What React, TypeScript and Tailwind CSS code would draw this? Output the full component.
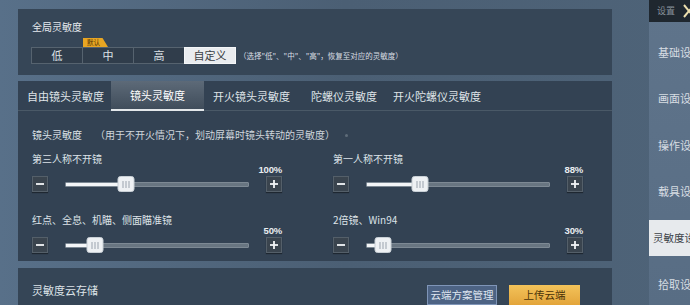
import React from "react";

type SliderProps = {
  label: string;
  percent: string;
  pos: number;
};

const TABS = [
  { label: "自由镜头灵敏度", w: "w-[93px]" },
  { label: "镜头灵敏度", w: "w-[93px]", active: true },
  { label: "开火镜头灵敏度", w: "w-[98px]" },
  { label: "陀螺仪灵敏度", w: "w-[82px]" },
  { label: "开火陀螺仪灵敏度", w: "w-[110px]" },
];

const MENU = ["基础设置", "画面设置", "操作设置", "载具设置", "灵敏度设置", "拾取设置"];

function StepButton({ plus }: { plus?: boolean }) {
  return (
    <div className="w-[16px] h-[16px] shrink-0 bg-[#3a444e] border border-[#545f69] shadow-[0_1px_1px_rgba(0,0,0,0.4)] flex items-center justify-center">
      <svg width="10" height="10" viewBox="0 0 10 10">
        <line x1="1" y1="5" x2="9" y2="5" stroke="#f2f4f6" strokeWidth="1.8" />
        {plus && <line x1="5" y1="1" x2="5" y2="9" stroke="#f2f4f6" strokeWidth="1.8" />}
      </svg>
    </div>
  );
}

function Slider({ label, percent, pos }: SliderProps) {
  return (
    <div className="w-[250px]">
      <div className="text-[10px] leading-[12px] text-[#dde3e8] whitespace-nowrap">{label}</div>
      <div className="h-[9px] text-[9.5px] leading-[9px] font-bold text-right text-[#e9edf0] font-['Liberation_Sans_Narrow','Liberation_Sans',sans-serif] tracking-[-0.2px]">
        {percent}
      </div>
      <div className="mt-[2px] h-[16px] flex items-center">
        <StepButton />
        <div className="relative ml-[17px] w-[184px] h-[5px] bg-[#687581] border border-[#7d8994] rounded-[1px]">
          <div className="absolute left-0 top-0 h-full bg-[#f4f6f8]" style={{ width: `${pos}%` }} />
          <div
            className="absolute top-1/2 -translate-y-1/2 -translate-x-1/2 w-[17px] h-[16px] rounded-[3px] bg-[#eef1f4] border border-[#c9d0d6] flex items-center justify-center gap-[2px]"
            style={{ left: `${pos}%` }}
          >
            <span className="w-px h-[7px] bg-[#9aa4ad]" />
            <span className="w-px h-[7px] bg-[#9aa4ad]" />
            <span className="w-px h-[7px] bg-[#9aa4ad]" />
          </div>
        </div>
        <div className="ml-[17px]">
          <StepButton plus />
        </div>
      </div>
    </div>
  );
}

export default function App() {
  return (
    <div className="w-[690px] h-[305px] overflow-hidden flex bg-gradient-to-r from-[#587089] via-[#4b5f74] to-[#4e6378] font-['Noto_Sans_CJK_SC',sans-serif]">
      {/* Main column */}
      <div className="ml-[18px] w-[594px] shrink-0 flex flex-col pt-[9px]">
        {/* Global sensitivity */}
        <div className="h-[68px] bg-[#364657] pl-[13px] pt-[12px]">
          <div className="text-[10px] leading-[12px] text-[#e6eaee] pl-px">全局灵敏度</div>
          <div className="relative mt-[14px] flex items-center">
            {["低", "中", "高"].map((t) => (
              <div
                key={t}
                className="w-[52px] h-[17px] bg-[#303d4b] border border-[#56636f] -mr-px flex items-center justify-center text-[11px] text-[#dde2e7]"
              >
                {t}
              </div>
            ))}
            <div className="w-[52px] h-[17px] bg-[#e9ecef] border border-[#f4f6f8] flex items-center justify-center text-[11px] text-[#3a3f45]">
              自定义
            </div>
            <span className="ml-[3px] text-[7.5px] text-[#d9dee3] whitespace-nowrap">
              （选择"低"、"中"、"高"，恢复至对应的灵敏度）
            </span>
            <div className="absolute left-[52px] -top-[9px] w-[25px] h-[9px] bg-[#e8a623] [clip-path:polygon(0_0,78%_0,100%_100%,0_100%)] pl-[4px] text-[6.5px] leading-[9px] text-[#4a3206]">
              默认
            </div>
          </div>
        </div>

        {/* Camera sensitivity */}
        <div className="mt-[6px] h-[185px] bg-[#334253]">
          <div className="h-[30px] flex border-b border-[#4a5967]">
            {TABS.map((tab) =>
              tab.active ? (
                <div
                  key={tab.label}
                  className={`${tab.w} shrink-0 bg-gradient-to-b from-[#5d6a78] to-[#404d5b] border-b-2 border-[#e3e7ea] flex items-center justify-center text-[11px] text-white -mb-px`}
                >
                  {tab.label}
                </div>
              ) : (
                <div
                  key={tab.label}
                  className={`${tab.w} shrink-0 pl-[9px] flex items-center text-[11px] text-[#dfe4e8] whitespace-nowrap`}
                >
                  {tab.label}
                </div>
              )
            )}
          </div>

          <div className="pl-[14px]">
            <div className="mt-[18px] flex items-center text-[10px] leading-[12px]">
              <span className="text-[#dde3e8]">镜头灵敏度</span>
              <span className="ml-[13px] text-[#cfd6dc]">（用于不开火情况下，划动屏幕时镜头转动的灵敏度）</span>
              <span className="ml-[10px] w-[3px] h-[3px] rounded-full bg-[#5f6c79]" />
            </div>

            <div className="mt-[12px] flex gap-[51px]">
              <Slider label="第三人称不开镜" percent="100%" pos={33} />
              <Slider label="第一人称不开镜" percent="88%" pos={29} />
            </div>
            <div className="mt-[22px] flex gap-[51px]">
              <Slider label="红点、全息、机瞄、侧面瞄准镜" percent="50%" pos={16} />
              <Slider label="2倍镜、Win94" percent="30%" pos={9} />
            </div>
          </div>
        </div>

        {/* Cloud storage */}
        <div className="mt-[7px] flex-1 bg-[#354556] pl-[14px] pr-[32px] pt-[15px] flex items-start">
          <div className="text-[11px] leading-[14px] text-[#dde3e8]">灵敏度云存储</div>
          <div className="ml-auto mt-[2px] flex gap-[12px]">
            <div className="w-[70px] h-[20px] bg-[#4d6384] border border-[#7f95b8] flex items-center justify-center text-[10.5px] text-[#dfe6f0]">
              云端方案管理
            </div>
            <div className="w-[71px] h-[20px] bg-gradient-to-b from-[#f3c35a] to-[#e3a53a] flex items-center justify-center text-[10.5px] text-[#4a3208]">
              上传云端
            </div>
          </div>
        </div>
      </div>

      {/* Sidebar */}
      <div className="ml-[37px] w-[41px] shrink-0 bg-gradient-to-b from-[#5f748b] to-[#586d84] flex flex-col overflow-hidden">
        <div className="h-[22px] shrink-0 bg-[#1f272f] flex items-center pl-[8px]">
          <span className="text-[9px] text-[#87919b] whitespace-nowrap">设置</span>
          <svg className="ml-[8px] shrink-0" width="12" height="14" viewBox="0 0 12 14">
            <path d="M1 1 L11 13 M11 1 L1 13" stroke="#ecdfae" strokeWidth="2" />
          </svg>
        </div>
        <div className="pt-[12px] flex flex-col gap-[10.5px]">
          {MENU.map((m) =>
            m === "灵敏度设置" ? (
              <div
                key={m}
                className="h-[36px] shrink-0 bg-[#e7eaed] pl-[4px] flex items-center text-[10.5px] text-[#3b4148] whitespace-nowrap"
              >
                {m}
              </div>
            ) : (
              <div
                key={m}
                className="h-[36px] shrink-0 pl-[9px] flex items-center text-[11px] text-[#d7dde3] whitespace-nowrap"
              >
                {m}
              </div>
            )
          )}
        </div>
      </div>
    </div>
  );
}
